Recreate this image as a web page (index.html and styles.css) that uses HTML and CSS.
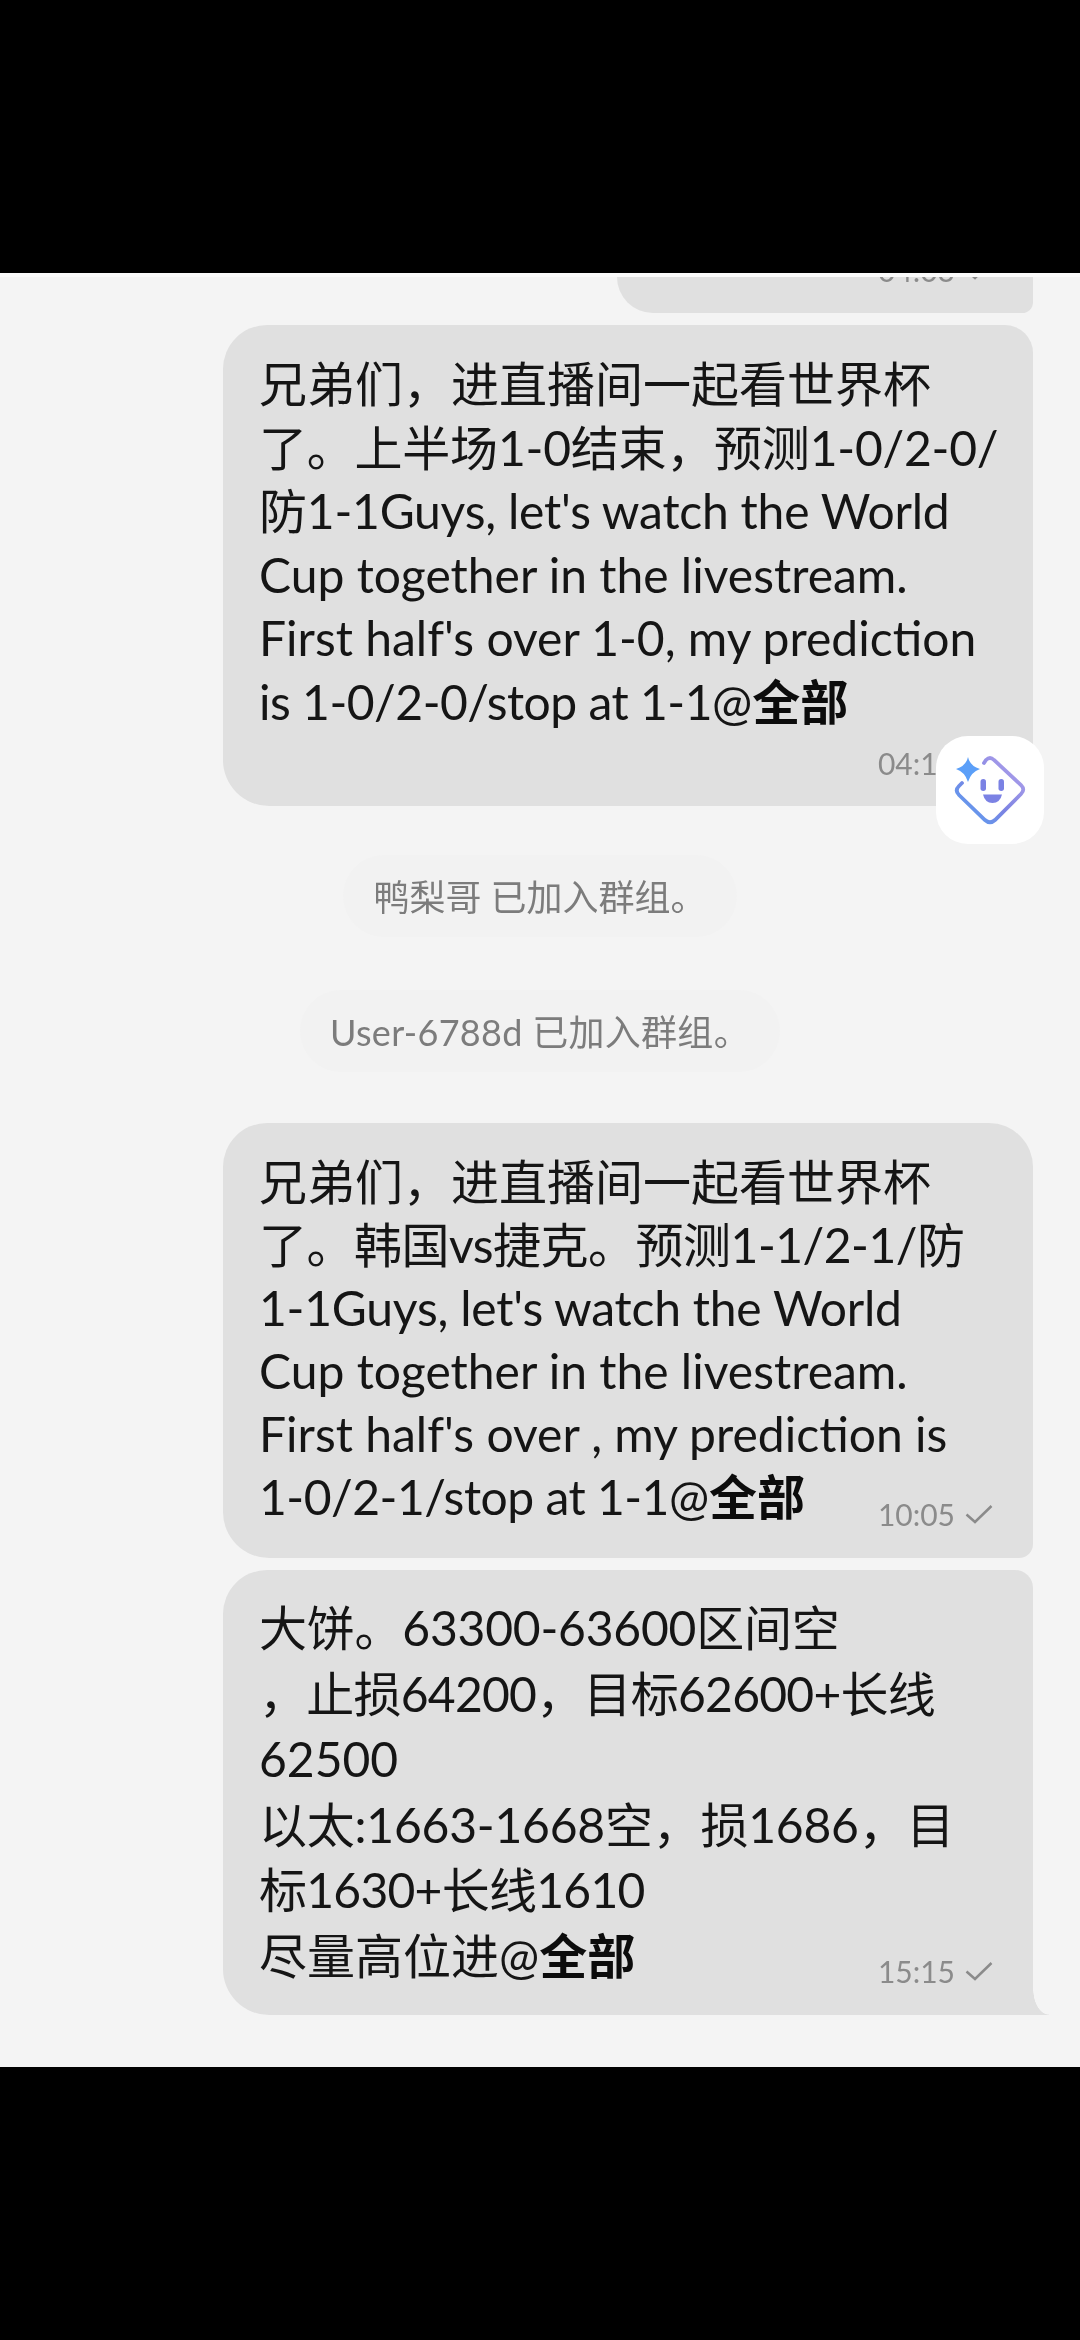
FILE: index.html
```html
<!DOCTYPE html>
<html lang="zh-CN">
<head>
  <meta charset="UTF-8">
  <title>群组聊天</title>
  <link rel="stylesheet" href="styles.css">
</head>
<body>
  <div class="bar"></div>

  <main class="chat">
    <div class="bubble cut">
      <div class="meta"><span class="time">04:03</span><svg class="check" viewBox="0 0 28 20"><path d="M1.5 10.5 10 18 26.5 2"/></svg></div>
    </div>

    <div class="bubble first">
      <p class="text">兄弟们，进直播间一起看世界杯<br><span class="tight-s">了。上半场1-0结束，预测1-0/2-0/</span><br><span class="tight-s">防1-1Guys, let's watch the World</span><br>Cup together in the livestream.<br>First half's over 1-0, my prediction<br><span class="tight">is 1-0/2-0/stop at 1-1</span>@<b>全部</b></p>
      <div class="meta own-row"><span class="time">04:13</span><svg class="check" viewBox="0 0 28 20"><path d="M1.5 10.5 10 18 26.5 2"/></svg></div>
    </div>

    <div class="notice">鸭梨哥 已加入群组。</div>
    <div class="notice second">User-6788d 已加入群组。</div>

    <div class="bubble grouped-top">
      <p class="text">兄弟们，进直播间一起看世界杯<br><span class="tight">了。韩国vs捷克。预测1-1/2-1/防</span><br><span class="tight-s">1-1Guys, let's watch the World</span><br>Cup together in the livestream.<br>First half's over , my prediction is<br><span class="tight">1-0/2-1/stop at 1-1</span>@<b>全部</b></p>
      <div class="meta"><span class="time">10:05</span><svg class="check" viewBox="0 0 28 20"><path d="M1.5 10.5 10 18 26.5 2"/></svg></div>
    </div>

    <div class="bubble grouped-last">
      <p class="text tall"><span class="tight-s">大饼。63300-63600区间空</span><br><span class="tight-m">，止损64200，目标62600+长线</span><br>62500<br><span class="tight-s">以太:1663-1668空，损1686，目</span><br><span class="tight-m">标1630+长线1610</span><br>尽量高位进@<b>全部</b></p>
      <div class="meta"><span class="time">15:15</span><svg class="check" viewBox="0 0 28 20"><path d="M1.5 10.5 10 18 26.5 2"/></svg></div>
    </div>

    <div class="assistant">
      <svg viewBox="0 0 108 108" width="108" height="108">
        <defs>
          <linearGradient id="ring" x1="0" y1="1" x2="1" y2="0">
            <stop offset="0" stop-color="#55a6f4"/>
            <stop offset="0.45" stop-color="#7b82e2"/>
            <stop offset="1" stop-color="#b9a6ec"/>
          </linearGradient>
        </defs>
        <path class="ring" d="M48 27l2-3q4-4 8 0L85 49q4.500 4.500 0 9L59 84q-5 4.500-10 0L23 59q-4.500-4.500 0-9l3-3"/>
        <path class="star" d="M32 21q2 9 12 12q-9 3-12 13q-3-10-12-13q10-3 12-12z"/>
        <rect class="face" x="44.500" y="43" width="5.500" height="12" rx="2.700"/>
        <rect class="face" x="62.500" y="43" width="5.500" height="12" rx="2.700"/>
        <path class="face" d="M47 58.500h19q-2 8.500-9.500 8.500q-7.500 0-9.500-8.500z"/>
      </svg>
    </div>
  </main>

  <div class="bar"></div>
</body>
</html>
```

FILE: styles.css
```css
html, body {
  margin: 0;
  padding: 0;
}
body {
  width: 1080px;
  height: 2340px;
  background: #000;
  display: flex;
  flex-direction: column;
  font-family: Lato, "Noto Sans CJK SC", sans-serif;
  overflow: hidden;
}
.bar {
  height: 273px;
  background: #000;
}
.chat {
  position: relative;
  height: 1794px;
  box-sizing: border-box;
  border-top: 4px solid #fafafa;
  background: #f4f4f4;
  display: flex;
  flex-direction: column;
  overflow: hidden;
  filter: blur(0.4px);
}
.bubble {
  position: relative;
  align-self: flex-end;
  box-sizing: border-box;
  width: 810px;
  height: 481px;
  margin-right: 47px;
  padding: 27px 36px 0 36px;
  background: #e0e0e0;
  border-radius: 44px 28px 40px 46px;
}
.bubble.cut {
  width: 416px;
  height: 36px;
  padding: 0 36px;
  display: flex;
  flex-direction: column;
  justify-content: flex-end;
  border-radius: 0 0 16px 54px;
  overflow: hidden;
}
.bubble.cut .meta {
  margin-top: 0;
  margin-bottom: 28px;
  flex-shrink: 0;
}
.bubble.first {
  margin-top: 12px;
}
.bubble.first .text {
  line-height: 63.500px;
}
.bubble.grouped-top {
  margin-top: 51px;
  height: 435px;
  border-radius: 44px 44px 14px 46px;
}
.bubble.grouped-last {
  margin-top: 12px;
  padding-top: 25px;
  height: 445px;
  border-radius: 44px 18px 0 46px;
}
.bubble.grouped-last::after {
  content: "";
  position: absolute;
  right: -16px;
  bottom: 0;
  width: 16px;
  height: 26px;
  background: radial-gradient(ellipse 16px 26px at 100% 0, transparent 97%, #e0e0e0 100%);
}
.text {
  margin: 0;
  height: 375px;
  font-size: 48px;
  line-height: 63px;
  color: #151515;
  white-space: nowrap;
}
.text.tall {
  height: 393px;
  line-height: 65.500px;
}
.text b {
  font-weight: 700;
  color: #0c0c0c;
}
.tight {
  letter-spacing: -0.5px;
}
.tight-m {
  letter-spacing: -0.75px;
}
.tight-s {
  letter-spacing: -0.22px;
}
.meta {
  display: flex;
  justify-content: flex-end;
  align-items: center;
  gap: 10px;
  height: 30px;
  margin-top: -26px;
  padding-right: 4px;
}
.meta.own-row {
  margin-top: 21px;
}
.bubble.grouped-last .meta {
  margin-top: -32px;
}
.time {
  font-size: 30px;
  line-height: 30px;
  color: #8b8b8b;
}
.check {
  width: 28px;
  height: 20px;
  fill: none;
  stroke: #8b8b8b;
  stroke-width: 2.500;
}
.notice {
  align-self: center;
  box-sizing: border-box;
  height: 82px;
  line-height: 84px;
  margin-top: 49px;
  padding: 0 30px;
  font-size: 36px;
  color: #7c7c7c;
  background: #f2f2f2;
  border-radius: 41px;
  white-space: nowrap;
}
.notice.second {
  margin-top: 53px;
  letter-spacing: 0.3px;
}
.assistant {
  position: absolute;
  left: 936px;
  top: 459px;
  width: 108px;
  height: 108px;
  background: #fff;
  border-radius: 32px;
}
.assistant svg {
  display: block;
}
.ring {
  fill: none;
  stroke: url(#ring);
  stroke-width: 3.800;
  stroke-linecap: round;
}
.star {
  fill: #5b9ff8;
}
.face {
  fill: #7b82e4;
}
```
